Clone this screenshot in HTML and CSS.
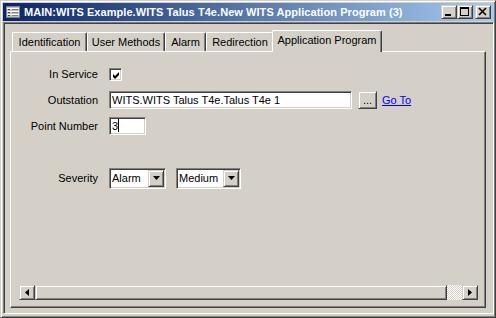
FILE: index.html
```html
<!DOCTYPE html>
<html>
    <head>
        <title>WITS Application Program</title>
        <meta charset="UTF-8">
        <link rel="stylesheet" href="styles.css">
    </head>
    <body>
        <div class="window">
            <div class="titlebar">
                <svg class="app_icon" width="16" height="16" viewBox="0 0 16 16">
                    <rect x="1.5" y="2.5" width="13" height="11" fill="#c0c0c0" stroke="#808080"/>
                    <rect x="2" y="4" width="12" height="1" fill="#fff"/>
                    <rect x="2" y="7" width="12" height="1" fill="#fff"/>
                    <rect x="2" y="10" width="12" height="1" fill="#fff"/>
                    <rect x="3" y="5" width="2" height="1" fill="#404040"/>
                    <rect x="3" y="8" width="2" height="1" fill="#404040"/>
                    <rect x="3" y="11" width="2" height="1" fill="#404040"/>
                    <rect x="7" y="5" width="6" height="1" fill="#808080"/>
                    <rect x="7" y="8" width="6" height="1" fill="#808080"/>
                    <rect x="7" y="11" width="6" height="1" fill="#808080"/>
                </svg>
                <span class="title">MAIN:WITS Example.WITS Talus T4e.New WITS Application Program (3)</span>
                <div class="caption_buttons">
                    <div class="cap_btn">
                        <svg width="14" height="12" viewBox="0 0 14 12"><rect x="3" y="8" width="6" height="2" fill="#000"/></svg>
                    </div>
                    <div class="cap_btn">
                        <svg width="14" height="12" viewBox="0 0 14 12"><rect x="2.5" y="1.5" width="8" height="8" fill="none" stroke="#000"/><rect x="2" y="1" width="9" height="2" fill="#000"/></svg>
                    </div>
                    <div class="cap_btn close_btn">
                        <svg width="14" height="12" viewBox="0 0 14 12"><path d="M3 2 L10 9 M10 2 L3 9" stroke="#000" stroke-width="1.6"/></svg>
                    </div>
                </div>
            </div>

            <div class="client">
                <div class="tabs">
                    <div class="tab tab_ident">Identification</div>
                    <div class="tab tab_methods">User Methods</div>
                    <div class="tab tab_alarm">Alarm</div>
                    <div class="tab tab_redirect">Redirection</div>
                    <div class="tab tab_selected">Application Program</div>
                </div>

                <div class="panel">
                    <div class="form">
                        <div class="label">In Service</div>
                        <div class="control">
                            <span class="checkbox">
                                <svg width="9" height="9" viewBox="0 0 9 9"><path d="M1 3 L3 5 L7 1 L7 4 L3 8 L1 6 Z" fill="#000"/></svg>
                            </span>
                        </div>

                        <div class="label">Outstation</div>
                        <div class="control">
                            <div class="field field_outstation">WITS.WITS Talus T4e.Talus T4e 1</div>
                            <div class="button dots_btn">...</div>
                            <a class="link" href="#">Go To</a>
                        </div>

                        <div class="label">Point Number</div>
                        <div class="control">
                            <div class="field field_point">3<span class="caret"></span></div>
                        </div>

                        <div class="label"></div>
                        <div class="control"></div>

                        <div class="label">Severity</div>
                        <div class="control severity">
                            <div class="combo combo_alarm">
                                <span class="combo_text">Alarm</span>
                                <span class="button combo_btn"><svg width="7" height="4" viewBox="0 0 7 4"><path d="M0 0 H7 L3.5 4 Z" fill="#000"/></svg></span>
                            </div>
                            <div class="combo combo_medium">
                                <span class="combo_text">Medium</span>
                                <span class="button combo_btn"><svg width="7" height="4" viewBox="0 0 7 4"><path d="M0 0 H7 L3.5 4 Z" fill="#000"/></svg></span>
                            </div>
                        </div>
                    </div>

                    <div class="hscroll">
                        <div class="button scroll_btn"><svg width="4" height="7" viewBox="0 0 4 7"><path d="M4 0 V7 L0 3.5 Z" fill="#000"/></svg></div>
                        <div class="button thumb"></div>
                        <div class="track"></div>
                        <div class="button scroll_btn"><svg width="4" height="7" viewBox="0 0 4 7"><path d="M0 0 V7 L4 3.5 Z" fill="#000"/></svg></div>
                    </div>
                </div>
            </div>
        </div>
    </body>
</html>
```

FILE: styles.css
```css
body {
    margin: 0;
    font-family: "Liberation Sans", Arial, sans-serif;
    font-size: 11px;
    overflow: hidden;
}
.window {
    box-sizing: border-box;
    width: 496px;
    height: 318px;
    padding: 2px 1px 3px 2px;
    background-color: #d4d0c8;
    border: 1px solid;
    border-color: #d4d0c8 #404040 #404040 #d4d0c8;
    box-shadow: inset 1px 1px #fff, inset -1px -1px #808080;
    display: flex;
    flex-direction: column;
}
.titlebar {
    height: 18px;
    flex: none;
    display: flex;
    align-items: center;
    padding-left: 2px;
    padding-right: 3px;
    background: linear-gradient(to right, #0a246a, #a6caf0);
}
.app_icon {
    flex: none;
}
.title {
    flex: 1;
    margin-left: 3px;
    color: #fff;
    font-weight: bold;
    font-size: 11px;
    letter-spacing: 0.06px;
    line-height: 18px;
    white-space: nowrap;
    overflow: hidden;
}
.caption_buttons {
    display: flex;
}
.cap_btn {
    box-sizing: border-box;
    width: 16px;
    height: 14px;
    background-color: #d4d0c8;
    border: 1px solid;
    border-color: #d4d0c8 #404040 #404040 #d4d0c8;
    box-shadow: inset 1px 1px #fff, inset -1px -1px #808080;
}
.cap_btn svg {
    display: block;
}
.close_btn {
    margin-left: 2px;
}
.client {
    flex: 1;
    margin-top: 1px;
    padding: 7px 7px 5px 6px;
    border: 1px solid;
    border-color: #808080 #fff #fff #808080;
    box-shadow: inset 1px 1px #404040, inset -1px -1px #d4d0c8;
    display: flex;
    flex-direction: column;
}
.tabs {
    height: 21px;
    flex: none;
    display: flex;
    align-items: flex-end;
    padding-left: 2px;
}
.tab {
    box-sizing: border-box;
    height: 19px;
    line-height: 18px;
    text-align: center;
    white-space: nowrap;
    border-top: 1px solid #fff;
    border-left: 1px solid #fff;
    border-right: 1px solid #404040;
    border-radius: 2px 2px 0 0;
    box-shadow: inset -1px 0 #808080;
}
.tab_ident {
    width: 75px;
}
.tab_methods {
    width: 78px;
}
.tab_alarm {
    width: 41px;
}
.tab_redirect {
    width: 68px;
}
.tab_selected {
    position: relative;
    z-index: 1;
    width: 110px;
    height: 22px;
    line-height: 19px;
    margin: 0 -2px -1px -2px;
    background-color: #d4d0c8;
}
.panel {
    flex: 1;
    display: flex;
    flex-direction: column;
    border: 1px solid;
    border-color: #fff #404040 #404040 #fff;
    box-shadow: inset -1px -1px #808080;
}
.form {
    flex: 1;
    padding-top: 9px;
    display: grid;
    grid-template-columns: 87px 1fr;
    grid-auto-rows: 26px;
    align-content: start;
    column-gap: 11px;
}
.label {
    align-self: center;
    text-align: right;
    white-space: nowrap;
}
.control {
    display: flex;
    align-items: center;
}
.checkbox {
    box-sizing: border-box;
    width: 13px;
    height: 13px;
    padding: 1px;
    background-color: #fff;
    border: 1px solid;
    border-color: #808080 #fff #fff #808080;
    box-shadow: inset 1px 1px #404040, inset -1px -1px #d4d0c8;
}
.checkbox svg {
    display: block;
    margin: 1px 0 0 1px;
}
.field {
    box-sizing: border-box;
    height: 18px;
    padding-left: 2px;
    line-height: 16px;
    background-color: #fff;
    white-space: nowrap;
    border: 1px solid;
    border-color: #808080 #fff #fff #808080;
    box-shadow: inset 1px 1px #404040, inset -1px -1px #d4d0c8;
}
.field_outstation {
    width: 243px;
}
.field_point {
    width: 37px;
}
.caret {
    display: inline-block;
    width: 1px;
    height: 13px;
    vertical-align: -2px;
    background-color: #000;
}
.button {
    box-sizing: border-box;
    background-color: #d4d0c8;
    border: 1px solid;
    border-color: #d4d0c8 #404040 #404040 #d4d0c8;
    box-shadow: inset 1px 1px #fff, inset -1px -1px #808080;
}
.dots_btn {
    width: 19px;
    height: 18px;
    margin-left: 6px;
    line-height: 17px;
    text-align: center;
}
.link {
    margin-left: 5px;
    color: #0000ff;
    text-decoration: underline;
}
.severity {
    gap: 10px;
}
.combo {
    box-sizing: border-box;
    height: 21px;
    display: flex;
    align-items: stretch;
    padding: 1px 1px 1px 0;
    background-color: #fff;
    border: 1px solid;
    border-color: #808080 #fff #fff #808080;
    box-shadow: inset 1px 1px #404040, inset -1px -1px #d4d0c8;
}
.combo_alarm {
    width: 57px;
}
.combo_medium {
    width: 65px;
}
.combo_text {
    flex: 1;
    padding-left: 2px;
    line-height: 17px;
}
.combo_btn {
    width: 16px;
    display: flex;
    align-items: center;
    justify-content: center;
}
.hscroll {
    height: 15px;
    flex: none;
    display: flex;
    margin: 0 7px 7px 8px;
}
.scroll_btn {
    width: 16px;
    display: flex;
    align-items: center;
    justify-content: center;
}
.thumb {
    flex: 1;
}
.track {
    width: 15px;
    background: repeating-conic-gradient(#fff 0 25%, #d4d0c8 0 50%) 0 0 / 2px 2px;
}
```
